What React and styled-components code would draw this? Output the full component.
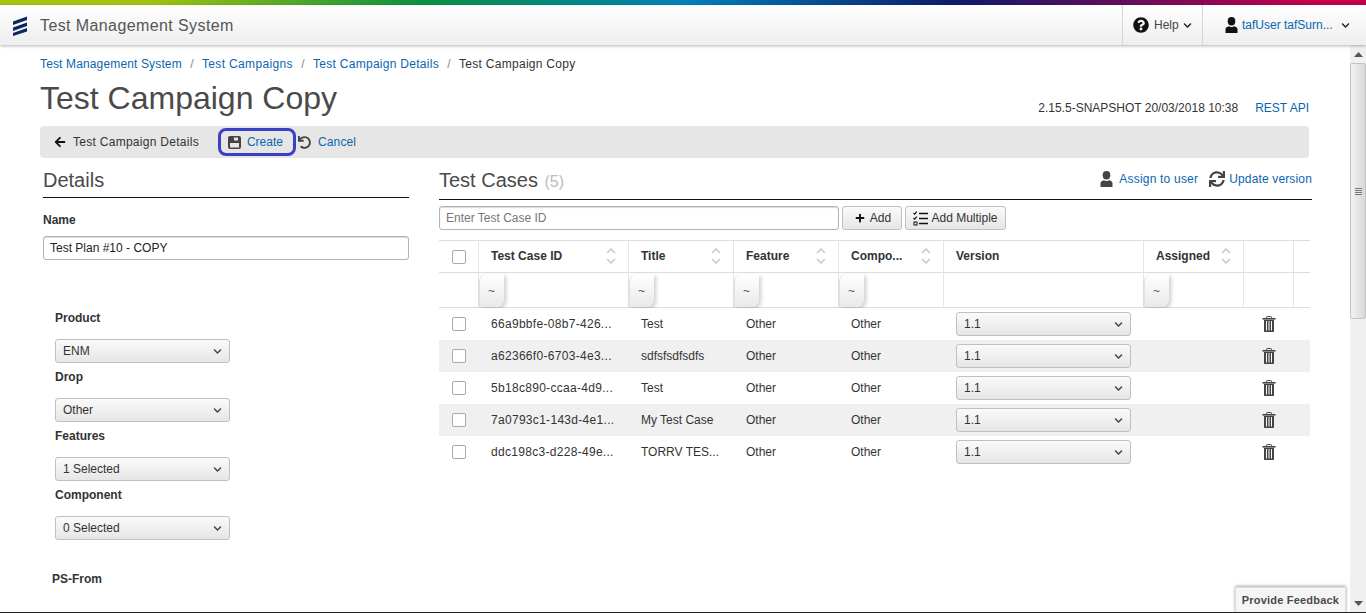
import React from 'react';
import styled, { createGlobalStyle } from 'styled-components';
import { FaArrowLeft, FaChevronDown, FaPlus, FaQuestionCircle, FaSync, FaUndo } from 'react-icons/fa';

const GlobalStyle = createGlobalStyle`
    html, body {
        margin: 0;
        padding: 0;
        height: 613px;
        overflow: hidden;
        background: #fff;
        font-family: "Liberation Sans", Arial, sans-serif;
        font-size: 12px;
        color: #333;
    }
`;

const Page = styled.div`
    position: relative;
    display: flex;
    flex-direction: column;
    height: 613px;
    box-sizing: border-box;
    border-bottom: 1px solid #222;
    overflow: hidden;
`;

const Rainbow = styled.div`
    height: 5px;
    flex: none;
    background: linear-gradient(90deg, #a5c50f 0%, #a1c30f 11%, #0a9040 31%, #0082b9 50%, #0f1a6b 70%, #c3004c 96%, #c3004c 100%);
`;

const Header = styled.header`
    position: relative;
    z-index: 2;
    display: flex;
    align-items: stretch;
    height: 40px;
    flex: none;
    background: linear-gradient(#fff, #eee);
    box-shadow: 0 1px 3px rgba(0, 0, 0, 0.3);
`;

const Brand = styled.div`
    display: flex;
    align-items: center;
    flex: 1;
    padding: 1px 0 0 12px;
    font-size: 16px;
    letter-spacing: 0.4px;
    color: #555;
`;

const Logo = styled.svg`
    width: 16px;
    height: 20px;
    margin-right: 12px;
`;

const HeaderCell = styled.div`
    display: flex;
    align-items: center;
    box-sizing: border-box;
    width: ${(p) => p.$width}px;
    padding-left: ${(p) => p.$pad}px;
    border-left: 1px solid #d5d5d5;
    color: ${(p) => p.$color};
    gap: 4px;
`;

const HelpIcon = styled(FaQuestionCircle)`
    width: 16px;
    height: 16px;
    color: #111;
    margin-right: 1px;
`;

const TinyChevron = styled(FaChevronDown)`
    width: 9px;
    height: 9px;
    color: #222;
    margin-left: ${(p) => p.$gap || 0}px;
`;

const Body = styled.div`
    display: flex;
    flex: 1;
    min-height: 0;
`;

const Main = styled.main`
    flex: 1;
    min-width: 0;
    box-sizing: border-box;
    padding: 11px 41px 0 40px;
    overflow: hidden;
`;

const Crumbs = styled.nav`
    display: flex;
    align-items: center;
    height: 16px;
    gap: 8.4px;
`;

const Link = styled.a`
    color: #0a66b0;
    text-decoration: none;
    letter-spacing: ${(p) => p.$spacing || 0}px;
`;

const Spaced = styled.span`
    letter-spacing: 0.28px;
`;

const CrumbSep = styled.span`
    color: #888;
`;

const TitleRow = styled.div`
    display: flex;
    justify-content: space-between;
    align-items: flex-end;
    height: 36px;
    margin-top: 8px;
`;

const Title = styled.h1`
    margin: 0;
    font-size: 32px;
    font-weight: 400;
    line-height: 36px;
    color: #4a4a4a;
`;

const Meta = styled.div`
    display: flex;
    gap: 17px;
    padding-bottom: 1px;
`;

const Toolbar = styled.div`
    display: flex;
    align-items: center;
    height: 32px;
    margin-top: 10px;
    padding-left: 14px;
    background: #e6e6e6;
    border-radius: 4px;
`;

const ToolItem = styled.span`
    display: flex;
    align-items: center;
    gap: 7px;
`;

const BackIcon = styled(FaArrowLeft)`
    width: 12px;
    height: 12px;
    color: #111;
`;

const CreateButton = styled.span`
    display: flex;
    align-items: center;
    box-sizing: border-box;
    height: 28px;
    width: 78px;
    margin-left: 19px;
    padding-left: 7px;
    gap: 6px;
    border: 3px solid #3a40c4;
    border-radius: 8px;
`;

const UndoIcon = styled(FaUndo)`
    width: 13px;
    height: 13px;
    color: #444;
    margin-left: 2px;
`;

const Columns = styled.div`
    display: grid;
    grid-template-columns: 366px 873px;
    column-gap: 30px;
    margin: 11px -3px 0 3px;
`;

const SectionHead = styled.div`
    display: flex;
    justify-content: space-between;
    align-items: center;
    box-sizing: border-box;
    height: ${(p) => p.$height}px;
    border-bottom: 1px solid #111;
    padding-bottom: ${(p) => p.$bottom}px;
`;

const SectionTitle = styled.h2`
    margin: 0;
    font-size: 20px;
    font-weight: 400;
    color: #4a4a4a;
`;

const Count = styled.span`
    margin-left: 1px;
    font-size: 16px;
    color: #bbb;
`;

const Actions = styled.div`
    display: flex;
    align-items: center;
    margin-bottom: 2px;
`;

const ActionLink = styled(Link)`
    display: flex;
    align-items: center;
    gap: ${(p) => p.$gap}px;
    margin-left: ${(p) => p.$left || 0}px;
`;

const SyncIcon = styled(FaSync)`
    width: 16px;
    height: 16px;
    color: #444;
`;

const NameLabel = styled.label`
    display: block;
    margin-top: 14px;
    line-height: 16px;
    font-weight: 700;
    color: #333;
`;

const TextInput = styled.input`
    display: block;
    box-sizing: border-box;
    width: ${(p) => p.$width};
    height: 24px;
    padding: 0 6px;
    border: 1px solid #b3b3b3;
    border-radius: 3px;
    box-shadow: inset 0 1px 1px rgba(0, 0, 0, 0.15);
    font: 12px "Liberation Sans", Arial, sans-serif;
    color: #222;
    &::placeholder {
        color: #777;
        opacity: 1;
    }
`;

const NameInput = styled(TextInput)`
    margin-top: 8px;
`;

const Filters = styled.div`
    margin: 50px 0 0 12px;
`;

const Field = styled.div`
    margin-bottom: 6px;
`;

const FieldLabel = styled.label`
    display: block;
    margin-bottom: 13px;
    line-height: 16px;
    font-weight: 700;
    color: #333;
`;

const SelectWrap = styled.div`
    position: relative;
    width: 175px;
    height: 24px;
`;

const Select = styled.select`
    display: block;
    width: 100%;
    height: 100%;
    padding: 0 0 0 7px;
    appearance: none;
    border: 1px solid #c0c0c0;
    border-radius: 3px;
    background: linear-gradient(#fafafa, #e6e6e6);
    font: 12px "Liberation Sans", Arial, sans-serif;
    color: #333;
`;

const SelectChevron = styled(FaChevronDown)`
    position: absolute;
    top: 8px;
    right: 8px;
    width: 9px;
    height: 9px;
    color: #444;
    pointer-events: none;
`;

const PsFrom = styled.div`
    margin: 31px 0 0 9px;
    line-height: 16px;
    font-weight: 700;
`;

const AddRow = styled.div`
    display: flex;
    align-items: center;
    gap: 3px;
    margin-top: 6px;
`;

const Button = styled.button`
    display: flex;
    align-items: center;
    justify-content: center;
    box-sizing: border-box;
    width: ${(p) => p.$width}px;
    height: 24px;
    padding: 0 0 0 ${(p) => p.$pad || 0}px;
    gap: ${(p) => p.$gap}px;
    border: 1px solid #c0c0c0;
    border-radius: 3px;
    background: linear-gradient(#fafafa, #e6e6e6);
    font: 12px "Liberation Sans", Arial, sans-serif;
    color: #333;
`;

const PlusIcon = styled(FaPlus)`
    width: 10px;
    height: 10px;
    color: #111;
`;

const Table = styled.table`
    width: 871px;
    margin-top: 10px;
    table-layout: fixed;
    border-collapse: separate;
    border-spacing: 0;
`;

const Th = styled.th`
    box-sizing: border-box;
    height: 33px;
    padding: 0 0 2px 12px;
    border-top: 1px solid #ddd;
    border-bottom: 1px solid #ddd;
    border-right: ${(p) => (p.$last ? 0 : '1px solid #e5e5e5')};
    text-align: left;
    font-size: 12px;
    font-weight: 700;
    color: #333;
`;

const ThInner = styled.div`
    display: flex;
    justify-content: space-between;
    align-items: center;
    padding-right: 12px;
`;

const FilterCell = styled.td`
    box-sizing: border-box;
    height: 35px;
    padding: 0;
    border-bottom: 1px solid #ddd;
    border-right: ${(p) => (p.$last ? 0 : '1px solid #e5e5e5')};
`;

const Tilde = styled.div`
    display: flex;
    align-items: center;
    box-sizing: border-box;
    width: 25px;
    height: 33px;
    padding: 2px 0 0 8px;
    border-left: 1px solid #e2e2e2;
    border-radius: 8px 0 8px 0;
    background: linear-gradient(#fff, #e9e9e9);
    box-shadow: 2px 2px 4px rgba(0, 0, 0, 0.2);
    font-size: 12px;
    color: #555;
`;

const Row = styled.tr`
    background: ${(p) => (p.$striped ? '#f0f0f0' : '#fff')};
`;

const Td = styled.td`
    box-sizing: border-box;
    height: 32px;
    padding: 0 0 0 12px;
    font-size: 12px;
    color: #333;
    white-space: nowrap;
`;

const IdCell = styled(Td)`
    letter-spacing: 0.3px;
`;

const TrashCell = styled(Td)`
    padding: 0;
    text-align: center;
`;

const CheckCell = styled(Td)`
    padding: 0 0 0 13px;
`;

const CheckHead = styled(Th)`
    padding: 0 0 0 13px;
`;

const Checkbox = styled.input.attrs({ type: 'checkbox' })`
    display: block;
    width: 14px;
    height: 14px;
    margin: 0;
    appearance: none;
    border: 1px solid #aaa;
    border-radius: 2px;
    background: #fff;
`;

const IconSvg = styled.svg`
    display: block;
    flex: none;
`;

const TrashSvg = styled(IconSvg)`
    display: inline-block;
    vertical-align: middle;
`;

const Scrollbar = styled.div`
    display: flex;
    flex-direction: column;
    align-items: stretch;
    width: 16px;
    flex: none;
    background: #f0f0f0;
`;

const ScrollArrow = styled.div`
    display: flex;
    align-items: center;
    justify-content: center;
    height: 18px;
    flex: none;
    color: #555;
`;

const Thumb = styled.div`
    display: flex;
    align-items: center;
    justify-content: center;
    height: 256px;
    flex: none;
    border: 1px solid #c4c4c4;
    border-radius: 2px;
    background: linear-gradient(90deg, #f2f2f2, #d9d9d9);
    box-sizing: border-box;
`;

const Grip = styled.div`
    width: 7px;
    height: 7px;
    background: repeating-linear-gradient(#777 0 1px, #e6e6e6 1px 2px);
`;

const Spacer = styled.div`
    flex: 1;
`;

const Feedback = styled.div`
    position: absolute;
    right: 20px;
    bottom: 0;
    display: flex;
    align-items: center;
    justify-content: center;
    box-sizing: border-box;
    width: 111px;
    height: 25px;
    background: #f5f5f5;
    border: 1px solid #ddd;
    border-bottom: 0;
    box-shadow: 0 -1px 3px rgba(0, 0, 0, 0.35);
    font-size: 11px;
    font-weight: 700;
    color: #4a4a4a;
    letter-spacing: 0.2px;
`;

const UserIcon = ({ color }) => (
    <IconSvg width="13" height="16" viewBox="0 0 13 16">
        <ellipse cx="6.5" cy="4.2" rx="3.8" ry="4.2" fill={color} />
        <path d="M0.5 16V12.5C0.5 10.5 2 9.6 4 9.2C5 10.2 8 10.2 9 9.2C11 9.6 12.5 10.5 12.5 12.5V16Z" fill={color} />
    </IconSvg>
);

const SaveIcon = () => (
    <IconSvg width="13" height="13" viewBox="0 0 13 13">
        <rect x="0" y="0" width="13" height="13" rx="2" fill="#444" />
        <rect x="6" y="1.5" width="4" height="3" fill="#e6e6e6" />
        <rect x="2" y="7" width="9" height="4.5" fill="#e6e6e6" />
    </IconSvg>
);

const ListIcon = () => (
    <IconSvg width="15" height="15" viewBox="0 0 15 15">
        <path d="M0.5 2L1.7 3.2L3.8 0.6M0.5 7L1.7 8.2L3.8 5.6" fill="none" stroke="#111" strokeWidth="1.2" />
        <rect x="1" y="11" width="3" height="3" fill="none" stroke="#111" />
        <path d="M6 2.5H15M6 7.5H15M6 12.5H15" stroke="#111" strokeWidth="1.6" />
    </IconSvg>
);

const SortIcon = () => (
    <IconSvg width="10" height="18" viewBox="0 0 10 18">
        <path d="M1 6L5 2L9 6M1 12L5 16L9 12" fill="none" stroke="#ccc" strokeWidth="1.7" />
    </IconSvg>
);

const TrashIcon = () => (
    <TrashSvg width="14" height="16" viewBox="0 0 14 16">
        <path d="M4.5 2V1.2C4.5 .6 5 .5 5.5 .5H8.5C9 .5 9.5 .6 9.5 1.2V2" fill="none" stroke="#444" />
        <rect x="0.5" y="2" width="13" height="1.6" fill="#444" />
        <path d="M2 4H12V15C12 15.6 11.6 16 11 16H3C2.4 16 2 15.6 2 15Z" fill="#444" />
        <path d="M4.5 5V14.5M7 5V14.5M9.5 5V14.5" stroke="#fff" strokeWidth="1" />
    </TrashSvg>
);

const columns = [
    { label: 'Test Case ID', width: 150, sort: true, filter: true },
    { label: 'Title', width: 105, sort: true, filter: true },
    { label: 'Feature', width: 105, sort: true, filter: true },
    { label: 'Compo...', width: 105, sort: true, filter: true },
    { label: 'Version', width: 200 },
    { label: 'Assigned', width: 100, sort: true, filter: true },
    { label: '', width: 50 },
    { label: '', width: 16, last: true },
];

const testCases = [
    { id: '66a9bbfe-08b7-426...', title: 'Test' },
    { id: 'a62366f0-6703-4e3...', title: 'sdfsfsdfsdfs' },
    { id: '5b18c890-ccaa-4d9...', title: 'Test' },
    { id: '7a0793c1-143d-4e1...', title: 'My Test Case' },
    { id: 'ddc198c3-d228-49e...', title: 'TORRV TES...' },
];

const filters = [
    { label: 'Product', value: 'ENM' },
    { label: 'Drop', value: 'Other' },
    { label: 'Features', value: '1 Selected' },
    { label: 'Component', value: '0 Selected' },
];

const Dropdown = ({ value }) => (
    <SelectWrap>
        <Select defaultValue={value}>
            <option>{value}</option>
        </Select>
        <SelectChevron />
    </SelectWrap>
);

const App = () => (
    <Page>
        <GlobalStyle />
        <Rainbow />
        <Header>
            <Brand>
                <Logo viewBox="0 0 16 20">
                    <path d="M1 5.5L15 0.5V4L1 9Z M1 11.5L15 6.5V10L1 15Z M1 17L15 12V15.5L1 20Z" fill="#0d2860" />
                </Logo>
                Test Management System
            </Brand>
            <HeaderCell $width={80} $pad={10} $color="#444">
                <HelpIcon />
                Help
                <TinyChevron />
            </HeaderCell>
            <HeaderCell $width={164} $pad={22} $color="#0a66b0">
                <UserIcon color="#111" />
                tafUser tafSurn...
                <TinyChevron $gap={4} />
            </HeaderCell>
        </Header>
        <Body>
            <Main>
                <Crumbs>
                    <Link $spacing={0.14}>Test Management System</Link>
                    <CrumbSep>/</CrumbSep>
                    <Link $spacing={0.35}>Test Campaigns</Link>
                    <CrumbSep>/</CrumbSep>
                    <Link $spacing={0.28}>Test Campaign Details</Link>
                    <CrumbSep>/</CrumbSep>
                    <Spaced>Test Campaign Copy</Spaced>
                </Crumbs>
                <TitleRow>
                    <Title>Test Campaign Copy</Title>
                    <Meta>
                        <span>2.15.5-SNAPSHOT 20/03/2018 10:38</span>
                        <Link>REST API</Link>
                    </Meta>
                </TitleRow>
                <Toolbar>
                    <ToolItem>
                        <BackIcon />
                        <Spaced>Test Campaign Details</Spaced>
                    </ToolItem>
                    <CreateButton>
                        <SaveIcon />
                        <Link>Create</Link>
                    </CreateButton>
                    <ToolItem>
                        <UndoIcon />
                        <Link $spacing={0.15}>Cancel</Link>
                    </ToolItem>
                </Toolbar>
                <Columns>
                    <section>
                        <SectionHead $height={29} $bottom={6}>
                            <SectionTitle>Details</SectionTitle>
                        </SectionHead>
                        <NameLabel>Name</NameLabel>
                        <NameInput $width="100%" defaultValue="Test Plan #10 - COPY" />
                        <Filters>
                            {filters.map((filter) => (
                                <Field key={filter.label}>
                                    <FieldLabel>{filter.label}</FieldLabel>
                                    <Dropdown value={filter.value} />
                                </Field>
                            ))}
                        </Filters>
                        <PsFrom>PS-From</PsFrom>
                    </section>
                    <section>
                        <SectionHead $height={31} $bottom={8}>
                            <SectionTitle>
                                Test Cases <Count>(5)</Count>
                            </SectionTitle>
                            <Actions>
                                <ActionLink $gap={6} $spacing={0.2}>
                                    <UserIcon color="#444" />
                                    Assign to user
                                </ActionLink>
                                <ActionLink $gap={4} $left={11} $spacing={0.15}>
                                    <SyncIcon />
                                    Update version
                                </ActionLink>
                            </Actions>
                        </SectionHead>
                        <AddRow>
                            <TextInput $width="400px" placeholder="Enter Test Case ID" />
                            <Button $width={60} $gap={5} $pad={2}>
                                <PlusIcon />
                                Add
                            </Button>
                            <Button $width={101} $gap={3}>
                                <ListIcon />
                                Add Multiple
                            </Button>
                        </AddRow>
                        <Table>
                            <colgroup>
                                <col width="40" />
                                {columns.map((column, i) => (
                                    <col key={i} width={column.width} />
                                ))}
                            </colgroup>
                            <thead>
                                <tr>
                                    <CheckHead>
                                        <Checkbox />
                                    </CheckHead>
                                    {columns.map((column, i) => (
                                        <Th key={i} $last={column.last}>
                                            <ThInner>
                                                {column.label}
                                                {column.sort && <SortIcon />}
                                            </ThInner>
                                        </Th>
                                    ))}
                                </tr>
                                <tr>
                                    <FilterCell />
                                    {columns.map((column, i) => (
                                        <FilterCell key={i} $last={column.last}>
                                            {column.filter && <Tilde>~</Tilde>}
                                        </FilterCell>
                                    ))}
                                </tr>
                            </thead>
                            <tbody>
                                {testCases.map((testCase, i) => (
                                    <Row key={testCase.id} $striped={i % 2 === 1}>
                                        <CheckCell>
                                            <Checkbox />
                                        </CheckCell>
                                        <IdCell>{testCase.id}</IdCell>
                                        <Td>{testCase.title}</Td>
                                        <Td>Other</Td>
                                        <Td>Other</Td>
                                        <Td>
                                            <Dropdown value="1.1" />
                                        </Td>
                                        <Td />
                                        <TrashCell>
                                            <TrashIcon />
                                        </TrashCell>
                                        <Td />
                                    </Row>
                                ))}
                            </tbody>
                        </Table>
                    </section>
                </Columns>
            </Main>
            <Scrollbar>
                <ScrollArrow>
                    <IconSvg width="9" height="5" viewBox="0 0 9 5">
                        <path d="M0 5L4.5 0L9 5Z" fill="currentColor" />
                    </IconSvg>
                </ScrollArrow>
                <Thumb>
                    <Grip />
                </Thumb>
                <Spacer />
                <ScrollArrow>
                    <IconSvg width="9" height="5" viewBox="0 0 9 5">
                        <path d="M0 0L4.5 5L9 0Z" fill="currentColor" />
                    </IconSvg>
                </ScrollArrow>
            </Scrollbar>
        </Body>
        <Feedback>Provide Feedback</Feedback>
    </Page>
);

export default App;
